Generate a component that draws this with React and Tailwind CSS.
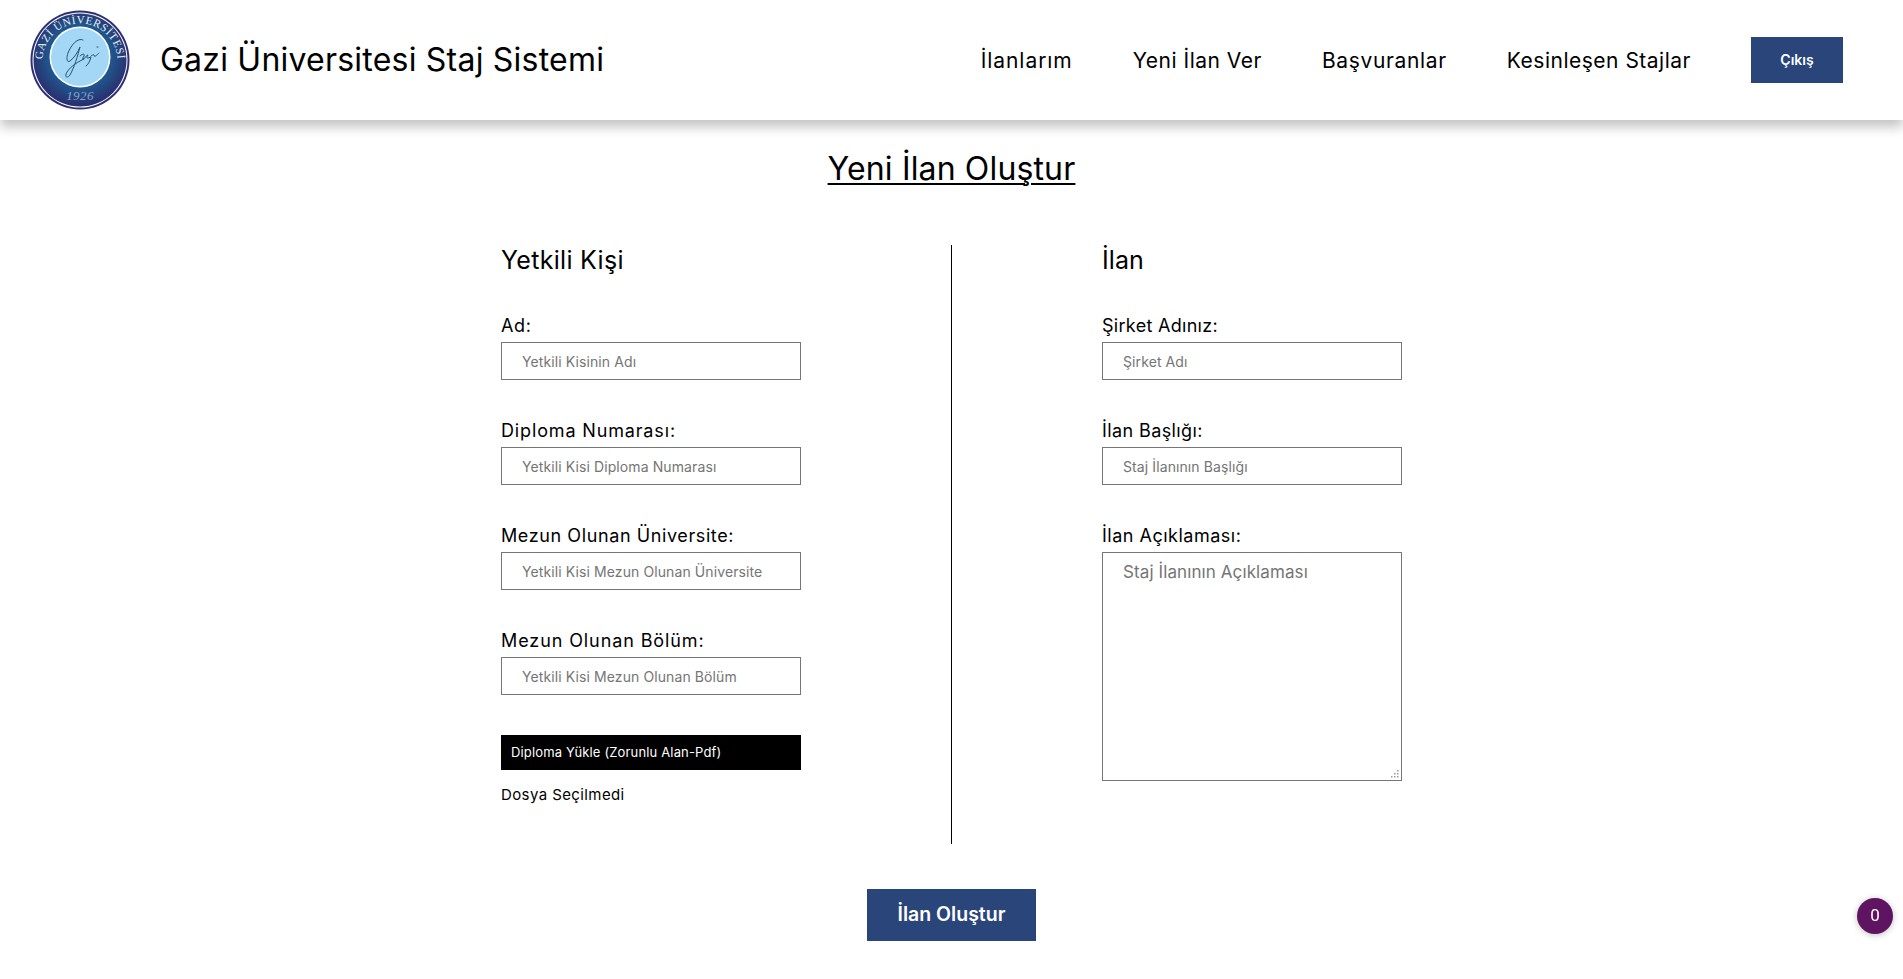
const font = "font-['Inter','Liberation_Sans',sans-serif]";

const Logo = () => (
  <svg width="100" height="100" viewBox="0 0 100 100">
    <defs>
      <radialGradient id="seal" cx="50%" cy="46%" r="54%">
        <stop offset="55%" stopColor="#1d5f92" />
        <stop offset="100%" stopColor="#2a2d6e" />
      </radialGradient>
      <path id="arcTop" d="M 13 57 A 37.5 37.5 0 1 1 87 57" />
    </defs>
    <circle cx="50" cy="50" r="49.5" fill="#2e2f75" />
    <circle cx="50" cy="50" r="47.5" fill="#fff" />
    <circle cx="50" cy="50" r="46.5" fill="url(#seal)" />
    <circle cx="50" cy="47" r="30.5" fill="#fff" />
    <circle cx="50" cy="47" r="29" fill="#a4d6f5" />
    <text fill="#e6eef6" fontSize="11.2" fontFamily="'Liberation Serif', serif" letterSpacing="0.55">
      <textPath href="#arcTop" startOffset="50%" textAnchor="middle">GAZİ ÜNİVERSİTESİ</textPath>
    </text>
    <text x="50" y="90" textAnchor="middle" fill="#86a3cc" fontSize="13" fontStyle="italic" fontFamily="'Liberation Serif', serif" letterSpacing="0.4">1926</text>
    <path
      d="M53 30c-5-3-12 5-15 13-2 6-1 10 2 8 4-3 8-9 10-14-2 8-6 21-10 28-2 3-5 3-4-1 2-5 9-11 18-15M50 46c2-2 5-3 4 0-1 2-2 3-1 3 2 0 3-4 5-4-1 2-2 3 0 3l3-1c-1 4-3 8-5 9M61 46c1-1 4-2 3 0 1 1 3-1 5-3M67 37l1 0"
      fill="none"
      stroke="#1c5578"
      strokeWidth="1"
      strokeLinecap="round"
    />
  </svg>
);

const Field = ({ label, placeholder, spacing = "tracking-[0.6px]" }) => (
  <div className="flex flex-col">
    <label className={`text-[18px] leading-[22px] text-black mb-[5px] ${spacing}`}>{label}</label>
    <input
      placeholder={placeholder}
      className="w-[300px] h-[38px] border border-[#767676] pl-5 text-[14px] tracking-[0.1px] placeholder:text-[#757575] outline-none"
    />
  </div>
);

export default function App() {
  return (
    <div className={`${font} min-h-[979px] bg-white text-black`}>
      <header className="h-[120px] flex items-center justify-between pl-[30px] pr-[60px] shadow-[0_7px_11px_rgba(0,0,0,0.24)]">
        <div className="flex items-center gap-[30px]">
          <Logo />
          <span className="text-[32px] tracking-[0.22px]">Gazi Üniversitesi Staj Sistemi</span>
        </div>
        <nav className="flex items-center gap-[60px] text-[21px] leading-none tracking-[0.5px]">
          <a className="tracking-[0.95px]">İlanlarım</a>
          <a>Yeni İlan Ver</a>
          <a className="tracking-[0.65px]">Başvuranlar</a>
          <a>Kesinleşen Stajlar</a>
          <button className="w-[92px] h-[46px] bg-[#2a457a] text-white text-[14px] tracking-normal font-semibold">Çıkış</button>
        </nav>
      </header>

      <main className="flex flex-col items-center">
        <h1 className="mt-[29px] text-[32px] leading-[40px] tracking-[0.15px] underline underline-offset-[3px] decoration-2">Yeni İlan Oluştur</h1>

        <div className="mt-[56px] w-[1201px] flex">
          <section className="w-[601px] h-[599px] border-r border-black pl-[150px]">
            <h2 className="text-[25px] leading-[30px] tracking-[0.3px]">Yetkili Kişi</h2>
            <div className="mt-[40px] flex flex-col gap-[40px]">
              <Field label="Ad:" placeholder="Yetkili Kisinin Adı" />
              <Field label="Diploma Numarası:" placeholder="Yetkili Kisi Diploma Numarası" spacing="tracking-[0.85px]" />
              <Field label="Mezun Olunan Üniversite:" placeholder="Yetkili Kisi Mezun Olunan Üniversite" />
              <Field label="Mezun Olunan Bölüm:" placeholder="Yetkili Kisi Mezun Olunan Bölüm" spacing="tracking-[0.9px]" />
            </div>
            <div className="mt-[40px] w-[300px] h-[35px] bg-black text-white text-[13px] tracking-[0.15px] flex items-center px-[10px]">
              Diploma Yükle (Zorunlu Alan-Pdf)
            </div>
            <p className="mt-[15px] text-[15px] leading-[20px] tracking-[0.4px]">Dosya Seçilmedi</p>
          </section>

          <section className="w-[600px] pl-[150px]">
            <h2 className="text-[25px] leading-[30px] tracking-[0.1px]">İlan</h2>
            <div className="mt-[40px] flex flex-col gap-[40px]">
              <Field label="Şirket Adınız:" placeholder="Şirket Adı" spacing="tracking-[0.3px]" />
              <Field label="İlan Başlığı:" placeholder="Staj İlanının Başlığı" spacing="tracking-[0.4px]" />
              <div className="flex flex-col">
                <label className="text-[18px] leading-[22px] mb-[5px] tracking-[0.5px]">İlan Açıklaması:</label>
                <div className="relative w-[300px] h-[229px]">
                  <textarea
                    placeholder="Staj İlanının Açıklaması"
                    className="block w-full h-full border border-[#767676] px-5 py-[8px] text-[17px] leading-[22px] tracking-[0.1px] resize-none placeholder:text-[#757575] outline-none"
                  />
                  <svg className="absolute right-[3px] bottom-[3px]" width="8" height="8" viewBox="0 0 8 8" fill="#9a9a9a">
                    <rect x="6" y="0" width="1.5" height="1.5" />
                    <rect x="3" y="3" width="1.5" height="1.5" />
                    <rect x="6" y="3" width="1.5" height="1.5" />
                    <rect x="0" y="6" width="1.5" height="1.5" />
                    <rect x="3" y="6" width="1.5" height="1.5" />
                    <rect x="6" y="6" width="1.5" height="1.5" />
                  </svg>
                </div>
              </div>
            </div>
          </section>
        </div>

        <button className="mt-[45px] w-[169px] h-[52px] bg-[#2a457a] text-white text-[19.5px] font-semibold">İlan Oluştur</button>
      </main>

      <div className="fixed right-[10px] bottom-[45px] w-[36px] h-[36px] rounded-full bg-[#5f1461] text-white text-[17px] flex items-center justify-center shadow-[0_1px_6px_rgba(0,0,0,0.25)] font-['Roboto',sans-serif]">0</div>
    </div>
  );
}
